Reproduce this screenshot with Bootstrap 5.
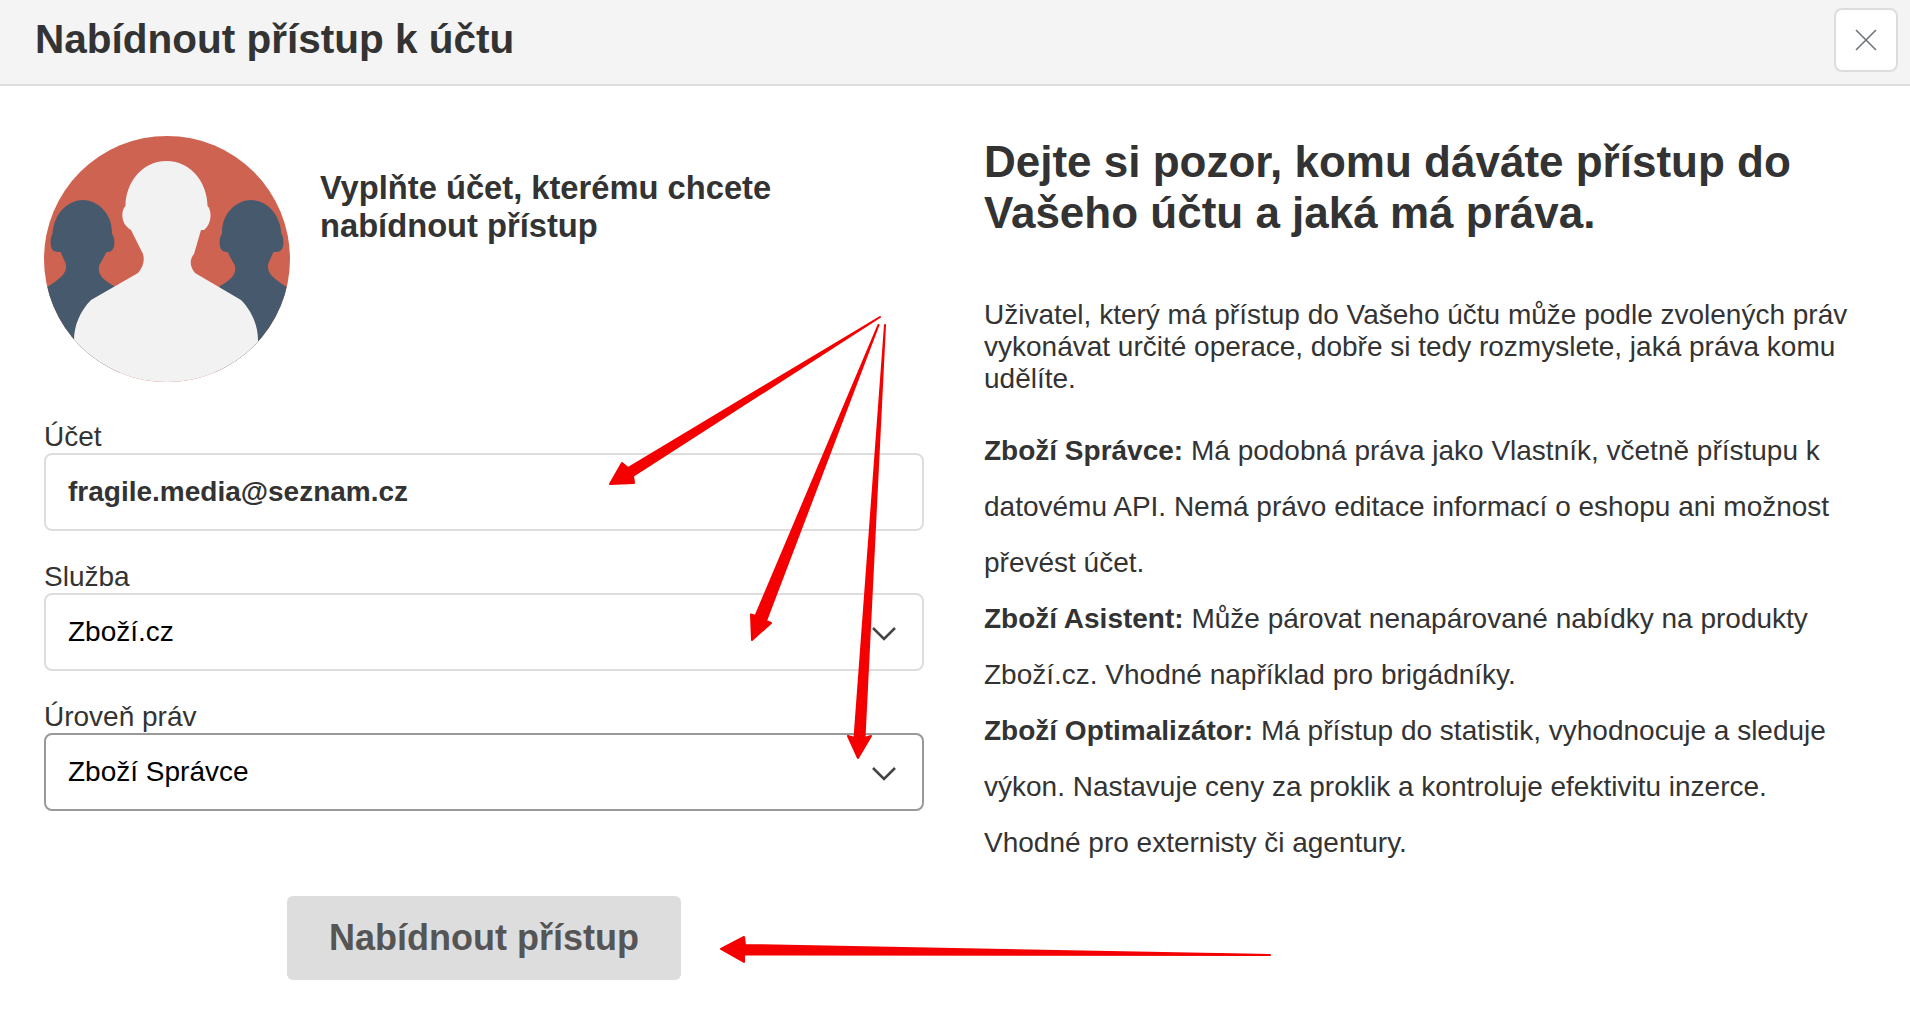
<!DOCTYPE html>
<html lang="cs">
<head>
<meta charset="utf-8">
<title>Nabídnout přístup k účtu</title>
<link href="https://cdn.jsdelivr.net/npm/bootstrap@5.3.0/dist/css/bootstrap.min.css" rel="stylesheet">
<style>
html, body { height: 100%; }
body { font-family: "Liberation Sans", Arial, sans-serif; color: #333; background: #fff; overflow: hidden; position: relative; }
.dlg-head { height: 86px; background: #f4f4f4; border-bottom: 2px solid #ddd; padding: 0 12px 5px 35px; }
.dlg-title { font-size: 40.5px; font-weight: 700; line-height: 1; margin: 0; color: #333; }
.dlg-close { width: 64px; height: 64px; background: #fff; border: 2px solid #ddd; border-radius: 8px; padding: 0; }
.dlg-body { padding: 50px 50px 0 44px; gap: 60px; }
.left-pane { width: 880px; flex: none; }
.avatar-svg { width: 246px; height: 246px; flex: none; display: block; }
.intro-text { font-size: 32.700px; font-weight: 700; line-height: 38px; margin: 33px 0 0; color: #333; }
.intro-row { gap: 30px; margin-bottom: 39px; }
.fld-label { font-size: 28px; line-height: 32px; margin: 0; color: #333; display: block; }
.fld-group { margin-bottom: 30px; }
.fld-group-last { margin-bottom: 0; }
.fld-input, .fld-select { height: 78px; font-size: 28px; padding: 0 60px 0 22px; border: 2px solid #ddd; border-radius: 8px; color: #000; }
.fld-input { font-weight: 700; color: #333; }
.fld-select { background-image: url("data:image/svg+xml,%3csvg xmlns='http://www.w3.org/2000/svg' viewBox='0 0 24 14'%3e%3cpath fill='none' stroke='%23444' stroke-width='2.6' d='M1 1l11 11L23 1'/%3e%3c/svg%3e"); background-size: 24px 14px; background-position: right 26px top 32px; }
.fld-active { border-color: #999; }
.send-btn { width: 394px; height: 84px; margin-top: 85px; background: #ddd; border: 0; border-radius: 6px; color: #555; font-size: 36px; font-weight: 700; padding: 0; }
.right-pane { min-width: 0; }
.warn-title { font-size: 44px; font-weight: 700; line-height: 51px; margin: 0 0 61px; color: #333; }
.warn-text { font-size: 28px; line-height: 32px; margin: 0 0 28px; color: #333; }
.role-text { font-size: 28px; line-height: 56px; margin: 0; color: #333; }
.arrows-svg { position: absolute; left: 0; top: 0; width: 1910px; height: 1028px; pointer-events: none; }
</style>
</head>
<body>
<div class="dlg-head d-flex align-items-center justify-content-between">
  <h1 class="dlg-title">Nabídnout přístup k účtu</h1>
  <button type="button" class="dlg-close d-flex align-items-center justify-content-center" aria-label="Zavřít">
    <svg width="22" height="22" viewBox="0 0 22 22"><path d="M1 1l20 20M21 1L1 21" stroke="#6c757d" stroke-width="1.6" fill="none"/></svg>
  </button>
</div>
<div class="dlg-body d-flex">
  <div class="left-pane d-flex flex-column">
    <div class="intro-row d-flex">
      <svg class="avatar-svg" viewBox="0 0 246 246" aria-hidden="true">
        <defs><clipPath id="avc"><circle cx="123" cy="123" r="123"/></clipPath></defs>
        <g clip-path="url(#avc)">
          <rect width="246" height="246" fill="#cf6352"/>
          <path fill="#475a6d" d="M39.2 64C52 64 68 76 68 96v2c3 3 3 12 1 15-2 3-4 3-6.500 3L55 130c-1 7 1 12 15 20l20 25-20 85H0l-5-105 8-4c15-9 21-15 18.500-24l-5-11c-4.500 0-6.500 0-8.500-3-2-3-2-12 .5-15C10 76 25 64 39.200 64Z"/>
          <path fill="#475a6d" d="M206.800 64C194 64 178 76 178 96v2c-3 3-3 12-1 15 2 3 4 3 6.500 3L191 130c1 7-1 12-15 20l-20 25 20 85h70l5-105-8-4c-15-9-21-15-18.500-24l5-11c4.500 0 6.500 0 8.500-3 2-3 2-12-.5-15C236 76 221 64 206.800 64Z"/>
          <path fill="#f2f2f2" d="M122.500 25C148 25 163.500 48 163.500 70c4.500 4 4.500 18-3.500 24h-3l-7 24c-5 6-4 13 1 19l46 27c11 11 17 26 17 40v56H30v-56c0-14 6-29 17-40l47-27c5-6 7-12 5-19l-12-24c-11-6-10-20-5.500-24C81.500 48 97 25 122.500 25Z"/>
        </g>
      </svg>
      <p class="intro-text">Vyplňte účet, kterému chcete nabídnout přístup</p>
    </div>
    <form class="d-flex flex-column">
      <div class="fld-group">
        <label class="fld-label" for="f1">Účet</label>
        <input id="f1" class="form-control fld-input" type="text" value="fragile.media@seznam.cz">
      </div>
      <div class="fld-group">
        <label class="fld-label" for="f2">Služba</label>
        <select id="f2" class="form-select fld-select"><option>Zboží.cz</option></select>
      </div>
      <div class="fld-group fld-group-last">
        <label class="fld-label" for="f3">Úroveň práv</label>
        <select id="f3" class="form-select fld-select fld-active"><option>Zboží Správce</option></select>
      </div>
      <button type="button" class="btn send-btn align-self-center">Nabídnout přístup</button>
    </form>
  </div>
  <div class="right-pane flex-grow-1">
    <h2 class="warn-title">Dejte si pozor, komu dáváte přístup do Vašeho účtu a jaká má práva.</h2>
    <p class="warn-text">Uživatel, který má přístup do Vašeho účtu může podle zvolených práv vykonávat určité operace, dobře si tedy rozmyslete, jaká práva komu udělíte.</p>
    <p class="role-text"><strong>Zboží Správce:</strong> Má podobná práva jako Vlastník, včetně přístupu k datovému API. Nemá právo editace informací o eshopu ani možnost převést účet.</p>
    <p class="role-text"><strong>Zboží Asistent:</strong> Může párovat nenapárované nabídky na produkty Zboží.cz. Vhodné například pro brigádníky.</p>
    <p class="role-text"><strong>Zboží Optimalizátor:</strong> Má přístup do statistik, vyhodnocuje a sleduje výkon. Nastavuje ceny za proklik a kontroluje efektivitu inzerce. Vhodné pro externisty či agentury.</p>
  </div>
</div>
<svg class="arrows-svg" viewBox="0 0 1910 1028" aria-hidden="true">
  <g fill="#f40000" stroke="#f40000" stroke-width="2" stroke-linejoin="round">
    <path d="M880 317 L633 476 L634 483 L610 484 L622 463 L628 468 Z"/>
    <path d="M878.500 325 L766 621 L771 623 L752 640 L751 614.500 L755.500 616 Z"/>
    <path d="M885 325 L864.500 738 L871 736 L858 758 L848 736 L854.500 738 Z"/>
    <path d="M1270 955 L744 954.500 L744 962 L721 949 L744 937 L745 945 Z"/>
  </g>
</svg>
<script src="https://cdn.jsdelivr.net/npm/bootstrap@5.3.0/dist/js/bootstrap.bundle.min.js"></script>
</body>
</html>
